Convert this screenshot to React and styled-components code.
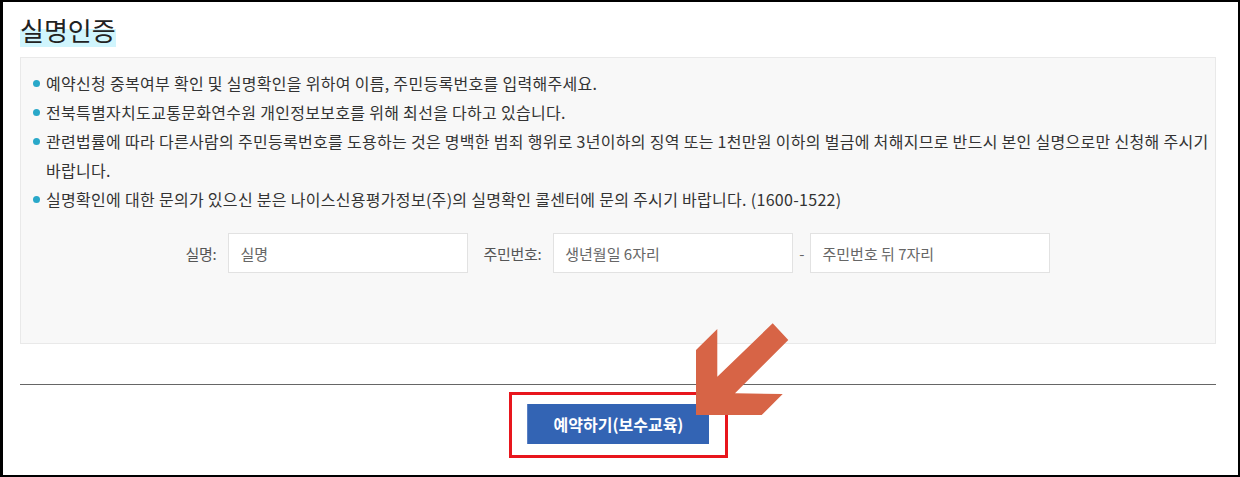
import React from "react";
import styled, { createGlobalStyle } from "styled-components";

const GlobalStyle = createGlobalStyle`
  html, body {
    margin: 0;
    padding: 0;
    background: #fff;
  }
  body {
    font-family: "Noto Sans CJK KR", "Noto Sans", sans-serif;
    color: #333;
  }
  * {
    box-sizing: border-box;
  }
`;

const notices = [
  "예약신청 중복여부 확인 및 실명확인을 위하여 이름, 주민등록번호를 입력해주세요.",
  "전북특별자치도교통문화연수원 개인정보보호를 위해 최선을 다하고 있습니다.",
  "관련법률에 따라 다른사람의 주민등록번호를 도용하는 것은 명백한 범죄 행위로 3년이하의 징역 또는 1천만원 이하의 벌금에 처해지므로 반드시 본인 실명으로만 신청해 주시기 바랍니다.",
  "실명확인에 대한 문의가 있으신 분은 나이스신용평가정보(주)의 실명확인 콜센터에 문의 주시기 바랍니다. (1600-1522)",
];

const App = () => {
  return (
    <>
      <GlobalStyle />
      <Frame>
        <Title>
          <Highlight>실명인증</Highlight>
        </Title>
        <InfoBox>
          <NoticeList>
            {notices.map((text) => (
              <Notice key={text}>{text}</Notice>
            ))}
          </NoticeList>
          <FormRow>
            <Label>실명:</Label>
            <Input placeholder="실명" />
            <Label $spaced>주민번호:</Label>
            <Input placeholder="생년월일 6자리" />
            <Dash>-</Dash>
            <Input placeholder="주민번호 뒤 7자리" />
          </FormRow>
        </InfoBox>
        <Divider />
        <ButtonArea>
          <ButtonWrap>
            <SubmitButton type="button">예약하기(보수교육)</SubmitButton>
            <RedMark />
            <Arrow viewBox="0 0 93 92" width="93" height="92">
              <polygon
                points="0,92 0,27 21.3,6 21.3,53.7 76.7,0.3 92.3,17 39,70.3 86.7,71 65.7,92"
                fill="#d76446"
              />
            </Arrow>
          </ButtonWrap>
        </ButtonArea>
      </Frame>
    </>
  );
};

const Frame = styled.div`
  height: 477px;
  border: 2px solid #000;
  border-left-width: 3px;
  padding: 11px 22px 0 17px;
  background: #fff;
  overflow: hidden;
`;

const Title = styled.h2`
  margin: 0;
  font-size: 26px;
  font-weight: 400;
  color: #222;
  line-height: 34px;
  height: 34px;
`;

const Highlight = styled.span`
  display: inline-block;
  background: linear-gradient(transparent 16px, #d0f5fd 16px);
`;

const InfoBox = styled.div`
  margin-top: 10px;
  background: #f8f8f8;
  border: 1px solid #e9e9e9;
  padding: 11px 12px 70px;
`;

const NoticeList = styled.ul`
  list-style: none;
  margin: 0 -8px 0 0;
  padding: 0;
`;

const Notice = styled.li`
  position: relative;
  padding-left: 13px;
  font-size: 16px;
  letter-spacing: 0.3px;
  line-height: 29px;
  color: #333;
  word-break: keep-all;

  &::before {
    content: "";
    position: absolute;
    left: 0;
    top: 11px;
    width: 7px;
    height: 7px;
    border-radius: 50%;
    background: #29a8c9;
  }
`;

const FormRow = styled.div`
  margin-top: 19px;
  display: flex;
  align-items: center;
  justify-content: center;
  gap: 12px;
`;

const Label = styled.span`
  font-size: 15px;
  letter-spacing: -0.3px;
  color: #555;
  margin-left: ${(p) => (p.$spaced ? "3px" : "0")};
`;

const Input = styled.input`
  width: 240px;
  height: 40px;
  border: 1px solid #e2e2e2;
  background: #fff;
  padding: 0 11px;
  font-family: inherit;
  font-size: 15px;
  color: #333;
  outline: none;

  &::placeholder {
    color: #666;
  }
`;

const Dash = styled.span`
  font-size: 15px;
  color: #666;
  margin: 0 -6px;
`;

const Divider = styled.hr`
  margin: 40px 0 0;
  border: none;
  border-top: 1px solid #666;
`;

const ButtonArea = styled.div`
  display: flex;
  justify-content: center;
  padding-top: 19px;
`;

const ButtonWrap = styled.div`
  position: relative;
`;

const SubmitButton = styled.button`
  display: block;
  width: 182px;
  height: 40px;
  border: none;
  border-left: 1px solid #5a80c4;
  background: #3364b4;
  color: #fff;
  font-family: inherit;
  font-size: 16px;
  font-weight: 700;
  cursor: pointer;
`;

const RedMark = styled.div`
  position: absolute;
  top: -12px;
  left: -18px;
  right: -19px;
  bottom: -14px;
  border: 3px solid #e8161d;
  pointer-events: none;
`;

const Arrow = styled.svg`
  position: absolute;
  left: 169px;
  top: -81px;
  pointer-events: none;
`;

export default App;
